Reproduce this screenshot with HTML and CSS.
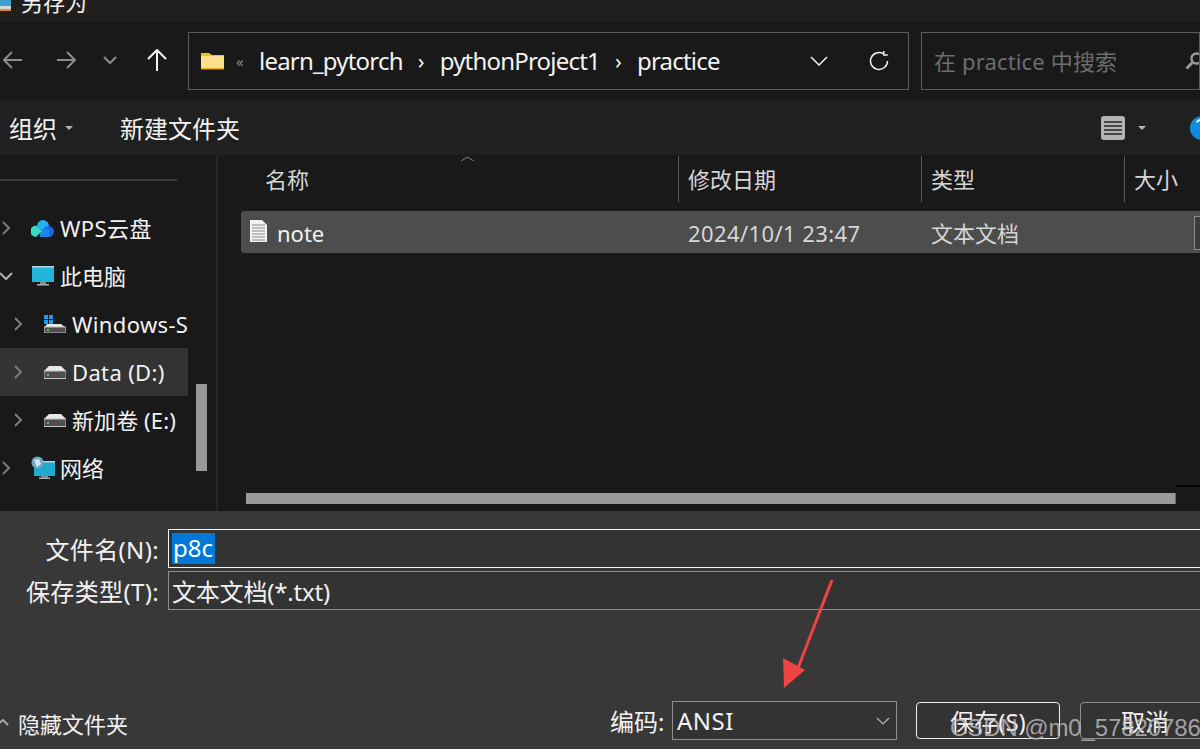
FILE: index.html
```html
<!DOCTYPE html>
<html>
<head>
  <meta charset="UTF-8" />
  <title>另存为</title>
  <link rel="stylesheet" href="styles.css">
</head>
<body>
<div class="window">

  <!-- Title bar, cut off by the screenshot -->
  <div class="titlebar">
    <svg class="title-icon" width="12" height="12" viewBox="0 0 12 12"><rect x="-4" y="0" width="15" height="11" fill="#3f9fd0"/><rect x="-4" y="6" width="15" height="3" fill="#d8d8d8"/><rect x="-4" y="9" width="15" height="2" fill="#d98a3a"/></svg>
    <span class="title-text">另存为</span>
  </div>

  <!-- Navigation -->
  <div class="navbar">
    <svg class="nav-icon back" width="22" height="20" viewBox="0 0 22 20"><path d="M2 10H20M10 2L2 10L10 18" fill="none" stroke="#8c8c8c" stroke-width="2"/></svg>
    <svg class="nav-icon forward" width="22" height="20" viewBox="0 0 22 20"><path d="M2 10H20M12 2L20 10L12 18" fill="none" stroke="#8c8c8c" stroke-width="2"/></svg>
    <svg class="nav-icon recent" width="14" height="9" viewBox="0 0 14 9"><path d="M1 1L7 7L13 1" fill="none" stroke="#8c8c8c" stroke-width="2"/></svg>
    <svg class="nav-icon up" width="20" height="22" viewBox="0 0 20 22"><path d="M10 22V2M1 10L10 1L19 10" fill="none" stroke="#f2f2f2" stroke-width="2"/></svg>

    <div class="address">
      <svg class="folder" width="23" height="18" viewBox="0 0 23 18"><path d="M0 1H8L11 3H23V17H0Z" fill="#f4b92e"/><rect x="0" y="4" width="23" height="12" fill="#fbe08a"/><rect x="0" y="16" width="23" height="1.5" fill="#e9a823"/></svg>
      <span class="crumb-more">«</span>
      <span class="crumb">learn_pytorch</span>
      <span class="crumb-sep">›</span>
      <span class="crumb">pythonProject1</span>
      <span class="crumb-sep">›</span>
      <span class="crumb">practice</span>
      <svg class="address-drop" width="18" height="10" viewBox="0 0 18 10"><path d="M1 1L9 9L17 1" fill="none" stroke="#f0f0f0" stroke-width="1.5"/></svg>
      <svg class="refresh" width="20" height="20" viewBox="0 0 20 20"><path d="M18.5 10A8.5 8.5 0 1 1 14.5 2.8" fill="none" stroke="#f0f0f0" stroke-width="1.5"/><path d="M14.8 0V4H18.8" fill="none" stroke="#f0f0f0" stroke-width="1.5"/></svg>
    </div>

    <div class="search">
      <span class="search-text">在 practice 中搜索</span>
      <svg class="search-icon" width="18" height="18" viewBox="0 0 18 18"><circle cx="11.5" cy="6.5" r="5" fill="none" stroke="#9a9a9a" stroke-width="2.4"/><path d="M7.5 10.5L1.5 16.5" stroke="#9a9a9a" stroke-width="3"/></svg>
    </div>
  </div>

  <!-- Toolbar -->
  <div class="toolbar">
    <span class="tool organize">组织</span>
    <span class="caret organize-caret"></span>
    <span class="tool new-folder">新建文件夹</span>
    <svg class="view-icon" width="24" height="24" viewBox="0 0 24 24"><rect width="24" height="24" rx="3" fill="#b4b4b4"/><path d="M3 6H21M3 10H21M3 14H21M3 18H21" stroke="#262626" stroke-width="1.4"/></svg>
    <span class="caret view-caret"></span>
    <svg class="help-dot" width="24" height="24" viewBox="0 0 24 24"><circle cx="12" cy="12" r="12" fill="#0f8be0"/><path d="M7 6.5A3 3 0 0 1 12 5V10" fill="none" stroke="#f4f4f4" stroke-width="2"/></svg>
  </div>

  <!-- Tree and file list -->
  <div class="main">
    <div class="sidebar">
      <div class="tree">
        <div class="tree-rule"></div>
        <div class="tree-row top-level wps">
          <svg class="chev" width="10" height="16" viewBox="0 0 10 16"><path d="M2 2L8 8L2 14" fill="none" stroke="#7c7c7c" stroke-width="2"/></svg>
          <svg class="tree-icon" width="23" height="17" viewBox="0 0 23 17"><circle cx="12" cy="6" r="6" fill="#27aef0"/><circle cx="17.5" cy="11.5" r="5.5" fill="#1668e3"/><rect x="9" y="9" width="9" height="8" fill="#1a86e8"/><path d="M5 5.5L11 11L5 17A5.7 5.7 0 0 1 5 5.5Z" fill="#35d9c4"/></svg>
          <span class="tree-label">WPS云盘</span>
        </div>
        <div class="tree-row top-level">
          <svg class="chev chev-open" width="14" height="10" viewBox="0 0 14 10"><path d="M1 2L7 8L13 2" fill="none" stroke="#b0b0b0" stroke-width="2"/></svg>
          <svg class="tree-icon" width="24" height="20" viewBox="0 0 24 20"><rect x="1" y="0" width="22" height="16" fill="#22b5d8"/><rect x="1" y="0" width="22" height="1.5" fill="#bcd4dc"/><rect x="9" y="16" width="6" height="2" fill="#7f8c92"/><rect x="6" y="18" width="12" height="1.5" fill="#a8b3b8"/></svg>
          <span class="tree-label">此电脑</span>
        </div>
        <div class="tree-row drive">
          <svg class="chev" width="10" height="16" viewBox="0 0 10 16"><path d="M2 2L8 8L2 14" fill="none" stroke="#7c7c7c" stroke-width="2"/></svg>
          <svg class="tree-icon" width="22" height="18" viewBox="0 0 22 18"><rect x="0" y="0" width="4" height="4" fill="#1e9be8"/><rect x="5" y="0" width="4" height="4" fill="#1e9be8"/><rect x="0" y="5" width="4" height="4" fill="#1e9be8"/><rect x="5" y="5" width="4" height="4" fill="#1e9be8"/><path d="M3 9H17L22 13H0Z" fill="#e8e8e8"/><rect y="12" width="22" height="6" fill="#4e4e4e" stroke="#c4c4c4"/><rect x="3" y="14" width="2" height="2" fill="#3fd13f"/></svg>
          <span class="tree-label">Windows-SSD (C:)</span>
        </div>
        <div class="tree-row drive current">
          <svg class="chev" width="10" height="16" viewBox="0 0 10 16"><path d="M2 2L8 8L2 14" fill="none" stroke="#7c7c7c" stroke-width="2"/></svg>
          <svg class="tree-icon" width="22" height="13" viewBox="0 0 22 13"><path d="M5 0H17L22 5H0Z" fill="#e8e8e8"/><rect y="5" width="22" height="7.5" fill="#4e4e4e" stroke="#c4c4c4"/><rect x="3" y="8" width="2" height="2" fill="#3fd13f"/></svg>
          <span class="tree-label">Data (D:)</span>
        </div>
        <div class="tree-row drive">
          <svg class="chev" width="10" height="16" viewBox="0 0 10 16"><path d="M2 2L8 8L2 14" fill="none" stroke="#7c7c7c" stroke-width="2"/></svg>
          <svg class="tree-icon" width="22" height="13" viewBox="0 0 22 13"><path d="M5 0H17L22 5H0Z" fill="#e8e8e8"/><rect y="5" width="22" height="7.5" fill="#4e4e4e" stroke="#c4c4c4"/><rect x="3" y="8" width="2" height="2" fill="#3fd13f"/></svg>
          <span class="tree-label cjk">新加卷 (E:)</span>
        </div>
        <div class="tree-row top-level">
          <svg class="chev" width="10" height="16" viewBox="0 0 10 16"><path d="M2 2L8 8L2 14" fill="none" stroke="#7c7c7c" stroke-width="2"/></svg>
          <svg class="tree-icon" width="24" height="24" viewBox="0 0 24 24"><rect x="3" y="5" width="21" height="15" fill="#22a9d0"/><rect x="3" y="5" width="21" height="1.5" fill="#bcd4dc"/><rect x="10" y="20" width="7" height="1.5" fill="#7f8c92"/><rect x="8" y="21.5" width="11" height="1.5" fill="#a8b3b8"/><circle cx="6.5" cy="6.5" r="6" fill="#6fa8c8"/><path d="M3 4L8 3L10 8L6 11Z" fill="#d8e6ee"/></svg>
          <span class="tree-label">网络</span>
        </div>
      </div>
      <div class="tree-scroll"><div class="tree-thumb"></div></div>
    </div>

    <div class="files">
      <div class="columns">
        <div class="col col-name">名称<span class="sort-mark"></span></div>
        <div class="col col-date">修改日期</div>
        <div class="col col-type">类型</div>
        <div class="col col-size">大小</div>
      </div>
      <div class="file-row">
        <svg class="file-icon" width="17" height="22" viewBox="0 0 17 22"><path d="M0 0H12L17 5V22H0Z" fill="#f2f2f2"/><path d="M2 5H15M2 8H15M2 11H15M2 14H15M2 17H15M2 20H15" stroke="#8a8a8a" stroke-width="1"/></svg>
        <span class="file-name">note</span>
        <span class="file-date">2024/10/1 23:47</span>
        <span class="file-type">文本文档</span>
        <span class="file-check"></span>
      </div>
      <div class="files-space"></div>
      <div class="hscroll"><div class="hthumb"></div></div>
    </div>
  </div>

  <!-- Save form -->
  <div class="footer">
    <div class="field">
      <label class="field-label">文件名(N):</label>
      <div class="field-box active"><span class="selected">p8c</span></div>
    </div>
    <div class="field second">
      <label class="field-label">保存类型(T):</label>
      <div class="field-box"><span class="field-value">文本文档(*.txt)</span></div>
    </div>
    <div class="footer-bottom">
      <div class="hide-folders">
        <svg width="10" height="7" viewBox="0 0 10 7"><path d="M-3 6L3 1L8 6" fill="none" stroke="#a8a8a8" stroke-width="2"/></svg>
        <span>隐藏文件夹</span>
      </div>
      <span class="encoding-label">编码:</span>
      <div class="encoding">
        <span>ANSI</span>
        <svg width="14" height="8" viewBox="0 0 14 8"><path d="M1 1L7 7L13 1" fill="none" stroke="#b5b5b5" stroke-width="1.2"/></svg>
      </div>
      <div class="btn primary">保存(S)</div>
      <div class="btn cancel">取消</div>
    </div>
  </div>

  <!-- Annotation and watermark lie over the dialog -->
  <svg class="arrow" width="70" height="120" viewBox="0 0 70 120"><path d="M50 2L16 90" stroke="#f04444" stroke-width="3"/><path d="M0 108L-1 78L21 90Z" fill="#f04444" transform="translate(2 2)"/></svg>
  <span class="watermark">CSDN @m0_57820786</span>
</div>
</body>
</html>
```
FILE: styles.css
```css
* {
  box-sizing: border-box;
}

html, body {
  margin: 0;
  height: 100%;
  overflow: hidden;
}

body {
  font-family: "Noto Sans", "Noto Sans CJK SC", sans-serif;
  color: #f2f2f2;
  background: #191919;
}

.window {
  position: relative;
  width: 1200px;
  height: 749px;
  overflow: hidden;
  display: flex;
  flex-direction: column;
}

/* Title bar */
.titlebar {
  height: 22px;
  flex: none;
  background: #201f1d;
  display: flex;
  align-items: flex-end;
  overflow: hidden;
}

.title-icon {
  margin-bottom: 10px;
}

.title-text {
  margin-left: 9px;
  font-size: 22px;
  line-height: 22px;
  margin-bottom: 9px;
}

/* Navigation */
.navbar {
  height: 78px;
  flex: none;
  background: #191919;
  display: flex;
  align-items: center;
}

.nav-icon {
  flex: none;
  margin-bottom: 2px;
}

.back {
  margin-left: 2px;
}

.forward {
  margin-left: 31px;
}

.recent {
  margin-left: 26px;
}

.up {
  margin-left: 30px;
}

.address {
  margin-left: 21px;
  width: 721px;
  height: 58px;
  border: 1px solid #5c5c5c;
  display: flex;
  align-items: center;
  padding-left: 12px;
}

.crumb-more {
  margin-left: 12px;
  width: 23px;
  font-size: 15px;
  color: #858585;
}

.crumb {
  font-size: 24px;
  letter-spacing: -0.8px;
  margin-bottom: 2px;
}

.crumb-sep {
  width: 37px;
  text-align: center;
  font-size: 22px;
  margin-bottom: 2px;
}

.address-drop {
  margin-left: auto;
}

.refresh {
  margin-left: 41px;
  margin-right: 19px;
}

.search {
  margin-left: 12px;
  flex: 1;
  height: 58px;
  border: 1px solid #5c5c5c;
  display: flex;
  align-items: center;
  padding-left: 12px;
  overflow: hidden;
}

.search-text {
  font-size: 22px;
  color: #6d6d6d;
  white-space: nowrap;
  letter-spacing: 0.15px;
  margin-bottom: 2px;
}

.search-icon {
  flex: none;
  margin-left: auto;
  margin-right: -4px;
}

/* Toolbar */
.toolbar {
  height: 55px;
  flex: none;
  background: #202020;
  display: flex;
  align-items: center;
}

.tool {
  font-size: 24px;
  white-space: nowrap;
}

.organize {
  margin-left: 9px;
}

.caret {
  width: 0;
  height: 0;
  border-left: 4px solid transparent;
  border-right: 4px solid transparent;
  border-top: 4px solid #b5b5b5;
}

.organize-caret {
  margin-left: 8px;
}

.new-folder {
  margin-left: 47px;
}

.view-icon {
  margin-left: auto;
}

.view-caret {
  margin-left: 13px;
}

.help-dot {
  flex: none;
  margin-left: 44px;
  margin-right: -14px;
}

/* Tree and file list */
.main {
  height: 356px;
  flex: none;
  display: flex;
  background: #191919;
}

.sidebar {
  width: 218px;
  flex: none;
  display: flex;
  border-right: 2px solid #262626;
}

.tree {
  width: 188px;
  flex: none;
  overflow: hidden;
}

.tree-rule {
  width: 177px;
  height: 2px;
  margin-top: 24px;
  margin-bottom: 23px;
  background: #3a3a3a;
}

.tree-row {
  height: 48px;
  display: flex;
  align-items: center;
  font-size: 22px;
  white-space: nowrap;
  position: relative;
}

.tree-row .chev {
  flex: none;
}

.top-level .chev {
  margin-left: 1px;
}

.top-level .chev-open {
  margin-left: -1px;
  margin-right: -2px;
}

.top-level .tree-icon {
  margin-left: 20px;
}

.top-level .tree-label {
  margin-left: 5px;
  margin-bottom: 2px;
}

.wps .tree-label {
  margin-left: 6px;
  letter-spacing: 0.4px;
}

.drive .chev {
  margin-left: 13px;
}

.drive .tree-icon {
  margin-left: 21px;
}

.drive .tree-label {
  margin-left: 6px;
  letter-spacing: 0.35px;
}

.drive .cjk {
  margin-bottom: 2px;
  letter-spacing: 0.1px;
}

.tree-icon {
  flex: none;
}

.current {
  background: #333333;
  border-radius: 0 2px 2px 0;
}

.tree-scroll {
  flex: 1;
  padding-top: 229px;
  padding-left: 8px;
}

.tree-thumb {
  width: 11px;
  height: 87px;
  background: #979797;
}

.files {
  flex: 1;
  min-width: 0;
  display: flex;
  flex-direction: column;
  padding-left: 23px;
}

.columns {
  height: 47px;
  flex: none;
  display: flex;
  font-size: 22px;
  color: #d6d6d6;
}

.col {
  position: relative;
  padding-left: 9px;
  padding-bottom: 2px;
  border-left: 1px solid #5a5a5a;
  display: flex;
  align-items: center;
  margin-top: 1px;
}

.col-name {
  width: 437px;
  border-left: none;
  padding-left: 24px;
}

.sort-mark {
  position: absolute;
  left: 222px;
  top: 0;
  width: 9px;
  height: 9px;
  border-left: 1px solid #9a9a9a;
  border-top: 1px solid #9a9a9a;
  transform: scaleY(0.6) rotate(45deg);
}

.col-date {
  width: 243px;
}

.col-type {
  width: 203px;
}

.col-size {
  flex: 1;
}

.file-row {
  height: 42px;
  flex: none;
  margin-top: 9px;
  background: #4d4d4d;
  border-radius: 3px 0 0 3px;
  display: flex;
  align-items: center;
  font-size: 22px;
  position: relative;
}

.file-icon {
  flex: none;
  margin-left: 9px;
  margin-bottom: 2px;
}

.file-name {
  margin-left: 10px;
  margin-top: 2px;
  width: 411px;
}

.file-date {
  width: 243px;
  margin-top: 2px;
  color: #d6d6d6;
  letter-spacing: 0.4px;
}

.file-type {
  color: #d6d6d6;
}

.file-check {
  position: absolute;
  right: -6px;
  top: 5px;
  width: 12px;
  height: 34px;
  border: 1px solid #8a8a8a;
  background: #3c3c3c;
}

.files-space {
  flex: 1;
}

.hscroll {
  height: 25px;
  flex: none;
  padding-left: 5px;
  padding-top: 7px;
  position: relative;
}

/* dark track end right of the thumb */
.hscroll::after {
  content: "";
  position: absolute;
  left: 935px;
  right: 0;
  top: -1px;
  height: 2px;
  background: #050505;
}

.hthumb {
  width: 930px;
  height: 11px;
  background: #9a9a9a;
  border-right: 1px solid #6a6a6a;
}

/* Save form */
.footer {
  flex: 1;
  background: #383838;
  display: flex;
  flex-direction: column;
  padding-top: 18px;
  font-size: 24px;
}

.field {
  display: flex;
  align-items: center;
  height: 39px;
}

.second {
  margin-top: 3px;
}

.field-label {
  width: 159px;
  flex: none;
  text-align: right;
  letter-spacing: 0.35px;
  white-space: nowrap;
}

.field-box {
  margin-left: 9px;
  flex: 1;
  height: 39px;
  border: 1px solid #8f8f8f;
  border-right: none;
  background: #333333;
  padding-left: 3px;
  display: flex;
  align-items: center;
}

.field-box.active {
  border: 1px solid #f4f4f4;
  border-right: none;
}

.selected {
  background: #0078d7;
  color: #fff;
  height: 31px;
  line-height: 29px;
  padding: 0 2px 0 1px;
}

.field-value {
  letter-spacing: -0.2px;
}

.footer-bottom {
  margin-top: 91px;
  display: flex;
  align-items: center;
  height: 39px;
  font-size: 22px;
}

.hide-folders {
  width: 610px;
  flex: none;
  display: flex;
  align-items: center;
  gap: 8px;
  padding-top: 4px;
}

.encoding-label {
  width: 62px;
  flex: none;
  white-space: nowrap;
  font-size: 24px;
}

.encoding {
  width: 225px;
  height: 39px;
  flex: none;
  border: 1px solid #8f8f8f;
  background: #333333;
  padding: 0 6px 0 4px;
  font-size: 24px;
  letter-spacing: 0.5px;
  display: flex;
  align-items: center;
  justify-content: space-between;
}

.btn {
  margin-left: 20px;
  flex: none;
  width: 144px;
  height: 37px;
  border: 1px solid #8f8f8f;
  border-radius: 4px;
  background: #333333;
  font-size: 24px;
  display: flex;
  align-items: center;
  justify-content: center;
}

.btn.primary {
  margin-left: 19px;
  border-color: #f0f0f0;
}

.btn.cancel {
  width: 130px;
}

/* Annotation */
.arrow {
  position: absolute;
  left: 782px;
  top: 578px;
  overflow: visible;
}

.watermark {
  position: absolute;
  left: 950px;
  top: 713px;
  font-family: "Liberation Sans", sans-serif;
  font-size: 24px;
  line-height: 30px;
  letter-spacing: -0.1px;
  color: rgba(190, 190, 190, 0.82);
  white-space: nowrap;
}
```
